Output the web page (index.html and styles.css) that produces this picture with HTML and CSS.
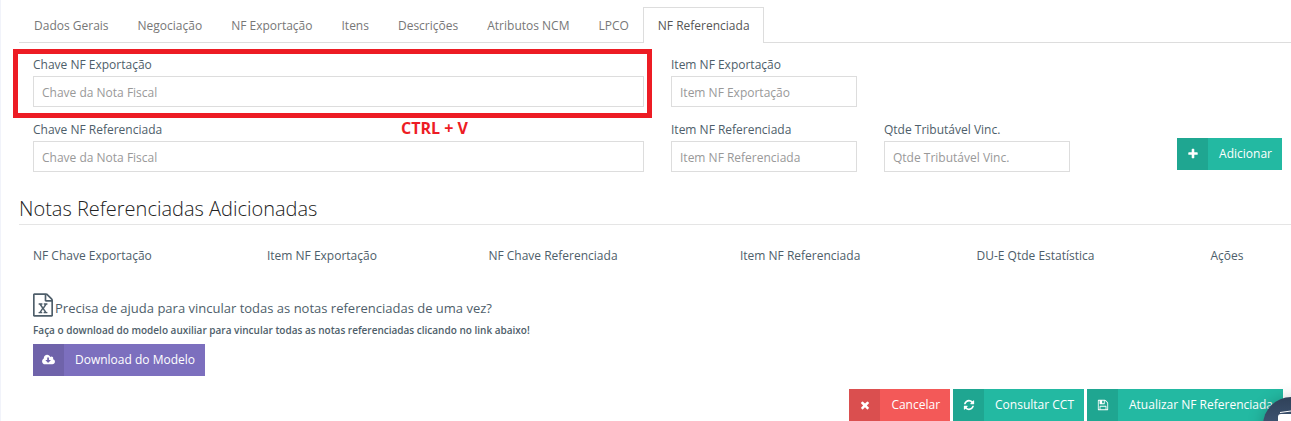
FILE: index.html
```html
<!DOCTYPE html>
<html lang="pt-br">
<head>
<meta charset="UTF-8">
<meta name="viewport" content="width=device-width, initial-scale=1.0">
<title>NF Referenciada</title>
<link rel="stylesheet" href="styles.css">
</head>
<body>
  <div class="page">
    <nav class="tabs">
      <a href="#dados">Dados Gerais</a>
      <a href="#negociacao">Negociação</a>
      <a href="#nfe">NF Exportação</a>
      <a href="#itens">Itens</a>
      <a href="#descricoes">Descrições</a>
      <a href="#atributos">Atributos NCM</a>
      <a href="#lpco">LPCO</a>
      <a href="#nfref" class="active">NF Referenciada</a>
    </nav>

    <form class="nf-form">
      <div class="form-group marked">
        <label for="chave_exp">Chave NF Exportação</label>
        <input type="text" id="chave_exp" placeholder="Chave da Nota Fiscal">
        <span class="mark-box"></span>
        <span class="mark-text">CTRL + V</span>
      </div>
      <div class="form-group">
        <label for="item_exp">Item NF Exportação</label>
        <input type="text" id="item_exp" placeholder="Item NF Exportação">
      </div>
      <div class="form-group first-col">
        <label for="chave_ref">Chave NF Referenciada</label>
        <input type="text" id="chave_ref" placeholder="Chave da Nota Fiscal">
      </div>
      <div class="form-group">
        <label for="item_ref">Item NF Referenciada</label>
        <input type="text" id="item_ref" placeholder="Item NF Referenciada">
      </div>
      <div class="form-group">
        <label for="qtde">Qtde Tributável Vinc.</label>
        <input type="text" id="qtde" placeholder="Qtde Tributável Vinc.">
      </div>
      <div class="form-action">
        <button type="button" class="btn green">
          <span class="btn-icon"><svg viewBox="0 0 1792 1792"><path d="M1600 736v192q0 40-28 68t-68 28h-416v416q0 40-28 68t-68 28h-192q-40 0-68-28t-28-68v-416h-416q-40 0-68-28t-28-68v-192q0-40 28-68t68-28h416v-416q0-40 28-68t68-28h192q40 0 68 28t28 68v416h416q40 0 68 28t28 68z"/></svg></span>
          <span class="btn-text">Adicionar</span>
        </button>
      </div>
    </form>

    <h3 class="section-title">Notas Referenciadas Adicionadas</h3>

    <table class="notas">
      <thead>
        <tr>
          <th class="c1">NF Chave Exportação</th>
          <th class="c2">Item NF Exportação</th>
          <th class="c3">NF Chave Referenciada</th>
          <th class="c4">Item NF Referenciada</th>
          <th class="c5">DU-E Qtde Estatística</th>
          <th>Ações</th>
        </tr>
      </thead>
    </table>

    <div class="help">
      <h4>
        <svg class="excel" viewBox="128 0 1536 1792"><path d="M1596 380q28 28 48 76t20 88v1152q0 40-28 68t-68 28h-1344q-40 0-68-28t-28-68v-1600q0-40 28-68t68-28h896q40 0 88 20t76 48zm-444-244v376h376q-10-29-22-41l-313-313q-12-12-41-22zm384 1528v-1024h-416q-40 0-68-28t-28-68v-416h-768v1536h1280zm-979-234v106h281v-106h-75l103-161q5-7 10-16.5t7.5-13.5 3.5-4h2q1 4 5 10 2 4 4.5 7.5t6 8 6.5 8.5l107 161h-76v106h291v-106h-68l-192-273 195-282h67v-107h-279v107h74l-103 159q-4 7-10 16.5t-9 13.5l-2 3h-2q-1-4-5-10-6-11-17-23l-106-159h76v-107h-290v107h68l189 272-194 283h-68z"/></svg>
        <span>Precisa de ajuda para vincular todas as notas referenciadas de uma vez?</span>
      </h4>
      <p>Faça o download do modelo auxiliar para vincular todas as notas referenciadas clicando no link abaixo!</p>
      <button type="button" class="btn purple">
        <span class="btn-icon"><svg class="cloud" viewBox="-64 0 1920 1792"><path d="M1216 928q0-14-9-23t-23-9h-224v-352q0-13-9.5-22.5t-22.5-9.5h-192q-13 0-22.5 9.5t-9.5 22.5v352h-224q-13 0-22.5 9.5t-9.5 22.5q0 14 9 23l352 352q9 9 23 9t23-9l351-351q10-12 10-24zm640 224q0 159-112.5 271.5t-271.5 112.5h-1088q-185 0-316.5-131.5t-131.5-316.5q0-130 70-240t188-165q-2-30-2-43 0-212 150-362t362-150q156 0 285.5 87t188.5 231q71-62 166-62 106 0 181 75t75 181q0 76-41 138 130 31 213.5 135.5t83.5 238.5z"/></svg></span>
        <span class="btn-text">Download do Modelo</span>
      </button>
    </div>

    <div class="footer">
      <button type="button" class="btn red">
        <span class="btn-icon"><svg viewBox="0 0 1792 1792"><path d="M1490 1322q0 40-28 68l-136 136q-28 28-68 28t-68-28l-294-294-294 294q-28 28-68 28t-68-28l-136-136q-28-28-28-68t28-68l294-294-294-294q-28-28-28-68t28-68l136-136q28-28 68-28t68 28l294 294 294-294q28-28 68-28t68 28l136 136q28 28 28 68t-28 68l-294 294 294 294q28 28 28 68z"/></svg></span>
        <span class="btn-text">Cancelar</span>
      </button>
      <button type="button" class="btn green">
        <span class="btn-icon"><svg viewBox="0 0 1792 1792"><path d="M1639 1056q0 5-1 7-64 268-268 434.5t-478 166.5q-146 0-282.5-55t-243.5-157l-129 129q-19 19-45 19t-45-19-19-45v-448q0-26 19-45t45-19h448q26 0 45 19t19 45-19 45l-137 137q71 66 161 102t187 36q134 0 250-65t186-179q11-17 53-117 8-23 30-23h192q13 0 22.5 9.5t9.5 22.5zm25-800v448q0 26-19 45t-45 19h-448q-26 0-45-19t-19-45 19-45l138-138q-148-137-349-137-134 0-250 65t-186 179q-11 17-53 117-8 23-30 23h-199q-13 0-22.5-9.5t-9.5-22.5v-7q65-268 270-434.5t480-166.5q146 0 284 55.5t245 156.5l130-129q19-19 45-19t45 19 19 45z"/></svg></span>
        <span class="btn-text">Consultar CCT</span>
      </button>
      <button type="button" class="btn green">
        <span class="btn-icon"><svg viewBox="0 0 1792 1792"><path d="M512 1536h768v-384h-768v384zm896 0h128v-896q0-14-10-38.5t-20-34.5l-281-281q-10-10-34-20t-39-10v416q0 40-28 68t-68 28h-576q-40 0-68-28t-28-68v-416h-128v1280h128v-416q0-40 28-68t68-28h832q40 0 68 28t28 68v416zm-384-928v-320q0-13-9.5-22.5t-22.5-9.5h-192q-13 0-22.5 9.5t-9.5 22.5v320q0 13 9.5 22.5t22.5 9.5h192q13 0 22.5-9.5t9.5-22.5zm640 32v928q0 40-28 68t-68 28h-1344q-40 0-68-28t-28-68v-1344q0-40 28-68t68-28h928q40 0 88 20t76 48l280 280q28 28 48 76t20 88z"/></svg></span>
        <span class="btn-text">Atualizar NF Referenciada</span>
      </button>
    </div>
  </div>

  <button type="button" class="chat" aria-label="Chat">
    <svg viewBox="0 0 28 28"><path d="M3 2.500Q14-.5 25 2.500" fill="none" stroke="#fff"/><rect x="1" y="4" width="26" height="18" rx="3" fill="#fff"/></svg>
  </button>
</body>
</html>
```
FILE: styles.css
```css
* {
  box-sizing: border-box;
}

body {
  margin: 0;
  background-color: #fff;
  color: #4e5e6a;
  font-family: "Open Sans", sans-serif;
  font-size: 12px;
  overflow: hidden;
}

.page {
  border-left: 1px solid #f1f3fa;
  padding-top: 7px;
}

/* tabs */
.tabs {
  display: flex;
  margin-left: 18px;
  border-bottom: 1px solid #ddd;
}

.tabs a {
  height: 36px;
  margin-bottom: -1px;
  padding: 0 13px 0 14px;
  border: 1px solid transparent;
  border-bottom: none;
  line-height: 36px;
  color: #777;
  text-decoration: none;
}

.tabs a.active {
  background-color: #fff;
  border-color: #ddd;
  color: #555;
}

/* form */
.nf-form {
  display: grid;
  grid-template-columns: 611fr 186fr 186fr 185fr;
  gap: 13px 27px;
  padding: 12px 9px 0 32px;
}

.form-group {
  display: flex;
  flex-direction: column;
  gap: 1px;
}

.form-group.first-col {
  grid-column: 1;
}

.form-group label {
  line-height: 20px;
  font-weight: 500;
}

.form-group input {
  width: 100%;
  height: 31px;
  padding: 1px 8px 0;
  border: 1px solid #ddd;
  background-color: #fff;
  font-family: inherit;
  font-size: 12px;
  color: #555;
}

.form-group input::placeholder {
  color: #999;
}

.form-action {
  display: flex;
  justify-content: flex-end;
  align-items: flex-end;
  padding-bottom: 2px;
}

/* red marker over the first field */
.marked {
  position: relative;
}

.mark-box {
  position: absolute;
  top: -6px;
  right: -8px;
  bottom: -11px;
  left: -20px;
  border: 5px solid #ed1c24;
  pointer-events: none;
}

.mark-text {
  position: absolute;
  top: 63px;
  left: 368px;
  line-height: 20px;
  font-size: 16px;
  font-weight: bold;
  color: #ed1c24;
}

/* buttons */
.btn {
  display: inline-flex;
  height: 32px;
  padding: 0;
  border: none;
  color: #fff;
  font-family: inherit;
  font-size: 12px;
  cursor: pointer;
}

.btn-icon {
  display: flex;
  align-items: center;
  justify-content: center;
  width: 31px;
  height: 100%;
  background-color: rgba(0, 0, 0, 0.1);
}

.btn-icon svg {
  width: 12px;
  height: 12px;
  fill: #fff;
}

.btn-icon svg.cloud {
  width: 13px;
}

.btn-text {
  padding: 0 10px 0 11px;
  line-height: 32px;
}

.green {
  background-color: #23b9a2;
}

.red {
  background-color: #f35958;
}

.purple {
  background-color: #7c6fbe;
}

/* list */
.section-title {
  margin: 24px 0 0 18px;
  padding-bottom: 2px;
  border-bottom: 1px solid #e5e5e5;
  line-height: 26px;
  font-size: 20px;
  font-weight: 300;
  color: #222;
}

.notas {
  width: 100%;
  padding-left: 32px;
  margin-top: 20px;
  border-spacing: 0;
  table-layout: fixed;
}

.notas th {
  padding: 0;
  line-height: 22px;
  text-align: left;
  font-weight: 500;
}

.c1 {
  width: 18.6%;
}

.c2 {
  width: 17.6%;
}

.c3 {
  width: 20%;
}

.c4 {
  width: 18.8%;
}

.c5 {
  width: 18.6%;
}

/* help */
.help {
  padding: 26px 32px 0;
}

.help h4 {
  display: flex;
  align-items: flex-end;
  gap: 2px;
  margin: 0;
  line-height: 18px;
  font-size: 13px;
  font-weight: 500;
}

.excel {
  width: 20px;
  height: 24px;
  fill: #4e5e6a;
}

.help p {
  margin: 6px 0 7px;
  line-height: 14px;
  font-size: 10px;
  font-weight: 600;
}

.footer {
  display: flex;
  justify-content: flex-end;
  gap: 3px;
  padding: 13px 8px 0;
}

/* chat bubble */
.chat {
  position: fixed;
  right: -28px;
  bottom: -32px;
  width: 56px;
  height: 56px;
  padding: 0;
  border: none;
  border-radius: 50%;
  background: linear-gradient(#2f4159, #4d688c);
  box-shadow: 0 2px 16px rgba(0, 0, 0, 0.25);
}

.chat svg {
  width: 28px;
  height: 28px;
}
```
